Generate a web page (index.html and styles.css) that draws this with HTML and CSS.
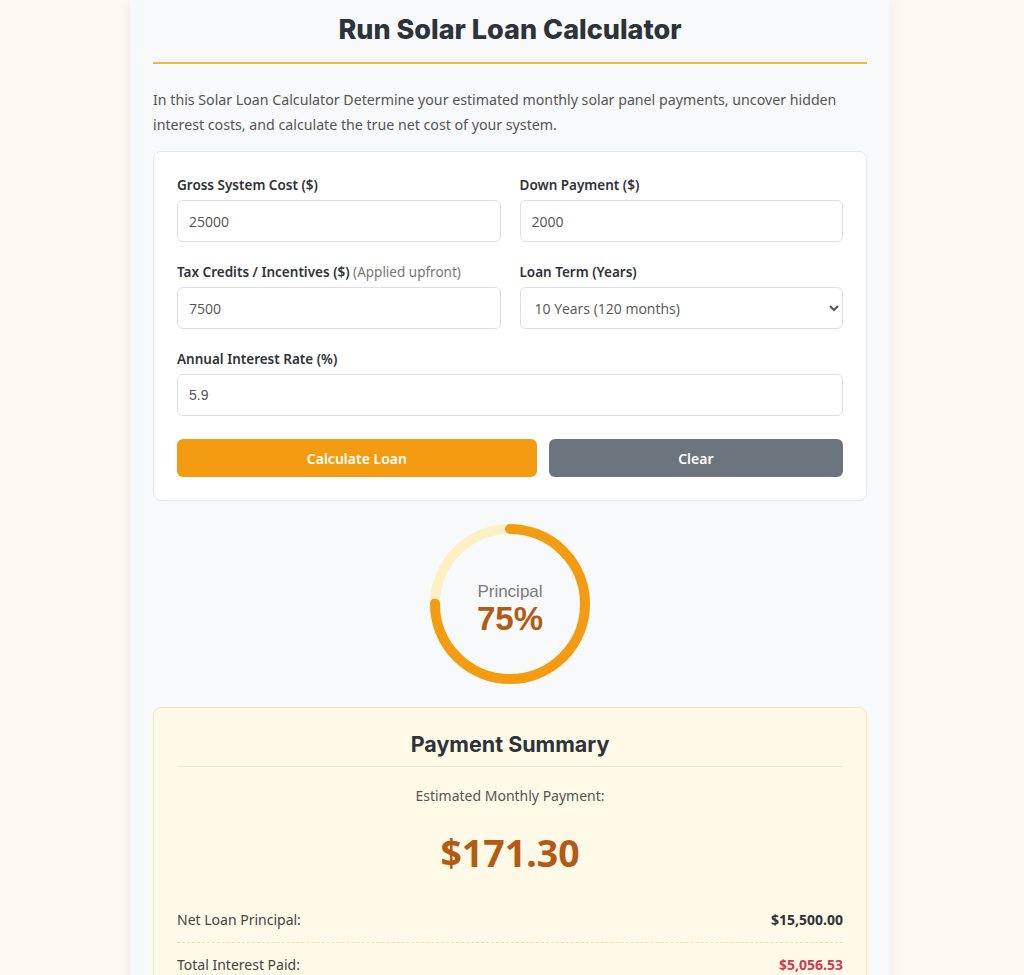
FILE: index.html
```html
<!DOCTYPE html>
<html lang="en">
<head>
  <meta charset="UTF-8">
  <meta name="viewport" content="width=device-width, initial-scale=1.0">
  <title>Run Solar Loan Calculator</title>
  <link rel="stylesheet" href="styles.css">
</head>

<body>
  <div class="calc">
    <h1 class="calc-title">Run Solar Loan Calculator</h1>
    <p class="intro">In this Solar Loan Calculator Determine your estimated monthly solar panel payments, uncover hidden interest costs, and calculate the true net cost of your system.</p>

    <div class="form-card">
      <div class="form-grid">
        <div class="field">
          <label for="gross">Gross System Cost ($)</label>
          <input type="number" id="gross" value="25000">
        </div>
        <div class="field">
          <label for="down">Down Payment ($)</label>
          <input type="number" id="down" value="2000">
        </div>
        <div class="field">
          <label for="credits">Tax Credits / Incentives ($) <span class="hint">(Applied upfront)</span></label>
          <input type="number" id="credits" value="7500">
        </div>
        <div class="field">
          <label for="term">Loan Term (Years)</label>
          <select id="term">
            <option>5 Years (60 months)</option>
            <option selected>10 Years (120 months)</option>
            <option>15 Years (180 months)</option>
            <option>20 Years (240 months)</option>
            <option>25 Years (300 months)</option>
          </select>
        </div>
        <div class="field wide">
          <label for="rate">Annual Interest Rate (%)</label>
          <input type="number" id="rate" value="5.9" class="rate">
        </div>
      </div>
      <div class="buttons">
        <button type="button" class="btn btn-calc">Calculate Loan</button>
        <button type="button" class="btn btn-clear">Clear</button>
      </div>
    </div>

    <div class="donut">
      <svg width="160" height="160" viewBox="0 0 160 160">
        <circle cx="80" cy="80" r="75" fill="none" stroke="#fdf0c4" stroke-width="10"/>
        <circle cx="80" cy="80" r="75" fill="none" stroke="#f39c12" stroke-width="10"
          stroke-linecap="round" stroke-dasharray="353.4 471.2" transform="rotate(-90 80 80)"/>
      </svg>
      <div class="donut-label">
        <span class="donut-name">Principal</span>
        <span class="donut-pct">75%</span>
      </div>
    </div>

    <div class="summary">
      <h2>Payment Summary</h2>
      <p class="monthly-label">Estimated Monthly Payment:</p>
      <div class="monthly">$171.30</div>
      <div class="row">
        <span>Net Loan Principal:</span>
        <b>$15,500.00</b>
      </div>
      <div class="row">
        <span>Total Interest Paid:</span>
        <b class="red">$5,056.53</b>
      </div>
      <div class="row">
        <span>Total Cost of Loan:</span>
        <b>$20,556.53</b>
      </div>
    </div>
  </div>
</body>

</html>
```

FILE: styles.css
```css
body {
  margin: 0;
  background-color: #fdf8f1;
  font-family: "Noto Sans", "Open Sans", sans-serif;
  color: #333;
}

.calc {
  width: 714px;
  margin: 0 auto;
  padding: 12px 23px 30px;
  background-color: #f8f9fa;
  box-shadow: 0 0 12px rgba(0, 0, 0, 0.06);
  position: relative;
  left: -2px;
}

.calc-title {
  margin: 0;
  padding-bottom: 14px;
  border-bottom: 2px solid #f3b73e;
  text-align: center;
  font-family: Inter, "Noto Sans", sans-serif;
  font-size: 27px;
  line-height: 36px;
  font-weight: 800;
  color: #2d3338;
}

.intro {
  margin: 23px 0 14px;
  font-size: 14.2px;
  line-height: 25px;
  color: #555;
}

.form-card {
  background: #fff;
  border: 1px solid #e6e9ec;
  border-radius: 8px;
  padding: 24px 23px 23px;
}

.form-grid {
  display: grid;
  grid-template-columns: 1fr 1fr;
  column-gap: 19px;
  row-gap: 21px;
}

.field {
  display: flex;
  flex-direction: column;
}

.field.wide {
  grid-column: 1 / 3;
}

.field label {
  font-size: 13.5px;
  font-weight: 600;
  line-height: 18px;
  color: #2e3338;
  margin-bottom: 6px;
}

.field .hint {
  font-weight: 400;
  color: #777;
}

.field input,
.field select {
  box-sizing: border-box;
  height: 42px;
  padding: 0 11px;
  border: 1px solid #dcdfe3;
  border-radius: 6px;
  background: #fff;
  font-family: "Open Sans", sans-serif;
  font-size: 14px;
  color: #555;
}

.field select {
  padding-left: 10px;
  padding-right: 6px;
}

.field input.rate {
  font-family: "Liberation Sans", Arial, sans-serif;
}

.buttons {
  display: grid;
  grid-template-columns: 11fr 9fr;
  gap: 12px;
  margin-top: 23px;
}

.btn {
  height: 38px;
  border: none;
  border-radius: 6px;
  color: #fff;
  font-family: "Noto Sans", sans-serif;
  font-size: 14px;
  font-weight: 600;
}

.btn-calc {
  background-color: #f39c12;
}

.btn-clear {
  background-color: #6c757d;
}

.donut {
  display: grid;
  width: 160px;
  height: 160px;
  margin: 23px auto 23px;
}

.donut svg,
.donut-label {
  grid-area: 1 / 1;
}

.donut-label {
  display: flex;
  flex-direction: column;
  align-items: center;
  justify-content: center;
  font-family: "Liberation Sans", Arial, sans-serif;
  padding-top: 10px;
}

.donut-name {
  font-size: 17px;
  line-height: 20px;
  color: #7a7a7a;
}

.donut-pct {
  font-size: 33px;
  line-height: 34px;
  font-weight: 700;
  color: #b35a14;
}

.summary {
  background-color: #fffae8;
  border: 1px solid #f8e8b8;
  border-radius: 8px;
  padding: 22px 23px 20px;
}

.summary h2 {
  margin: 0;
  padding-bottom: 8px;
  border-bottom: 1px solid #eee9d8;
  text-align: center;
  font-family: Inter, "Noto Sans", sans-serif;
  font-size: 21.5px;
  line-height: 28px;
  font-weight: 700;
  color: #2d3338;
}

.monthly-label {
  margin: 19px 0 0;
  text-align: center;
  font-size: 14px;
  line-height: 20px;
  color: #555;
}

.monthly {
  margin: 25px 0 35px;
  text-align: center;
  font-size: 37.5px;
  line-height: 44px;
  font-weight: 700;
  color: #b35a14;
}

.row {
  display: flex;
  justify-content: space-between;
  font-size: 14px;
  line-height: 20px;
  padding: 0 0 12px;
  border-bottom: 1px dashed #f1e2a8;
  color: #444;
}

.row + .row {
  padding-top: 12px;
}

.row b {
  color: #2d3338;
}

.row b.red {
  color: #d23a50;
}
```
